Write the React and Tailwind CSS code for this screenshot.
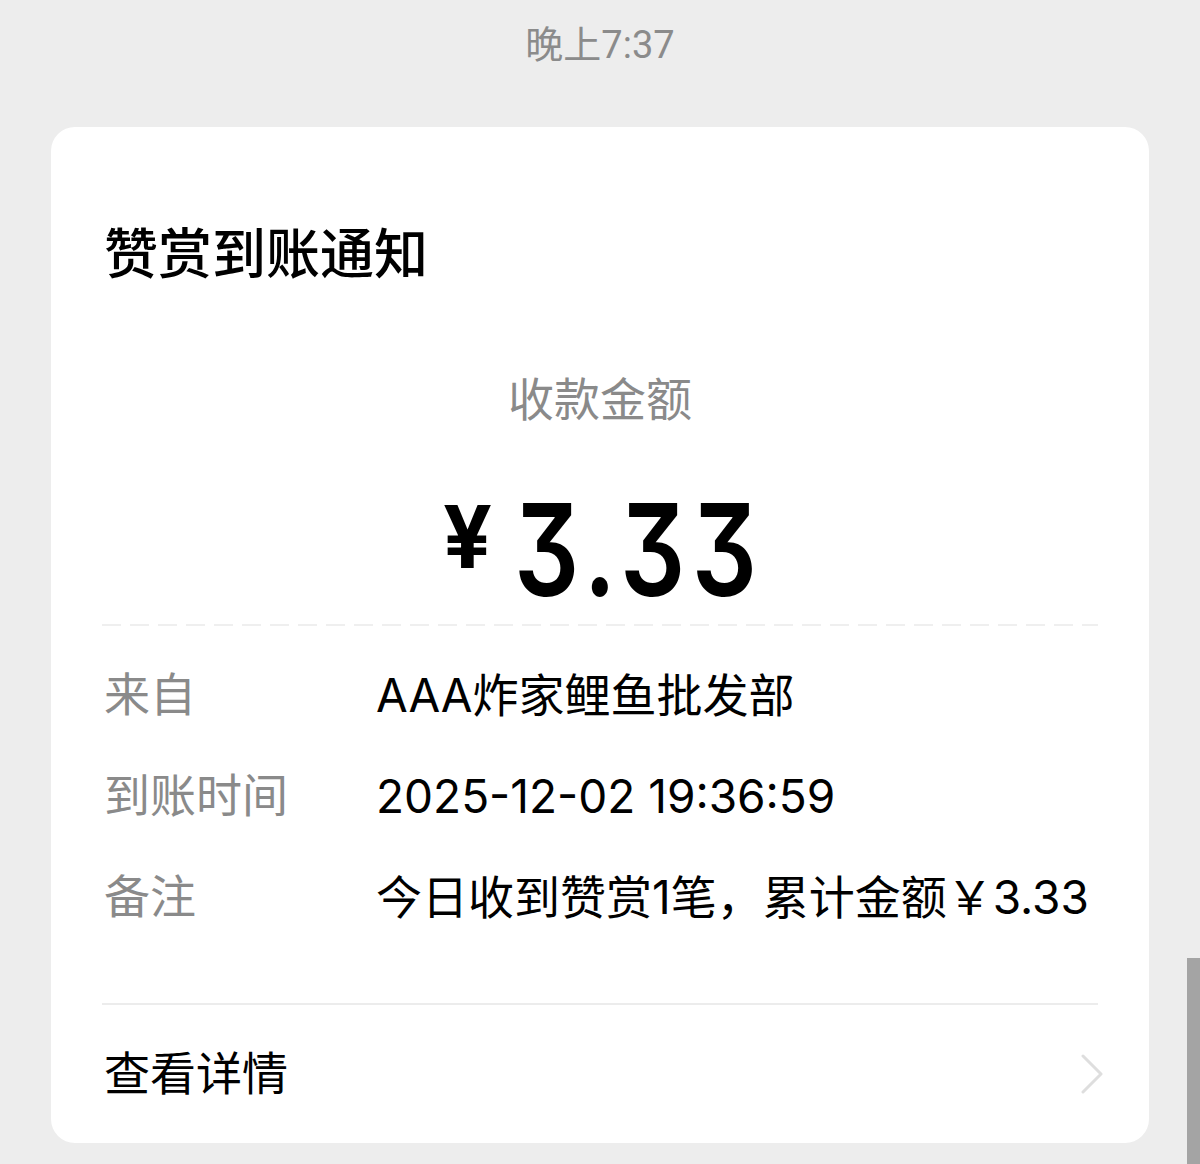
const rows = [
  { label: '来自', value: 'AAA炸家鲤鱼批发部' },
  { label: '到账时间', value: '2025-12-02 19:36:59' },
  { label: '备注', value: '今日收到赞赏1笔，累计金额￥3.33' },
]

const App = () => {
  return (
    <div className="relative h-[1164px] w-full overflow-hidden bg-[#ededed] font-['Roboto','Noto_Sans_CJK_SC',sans-serif]">
      {/* Time stamp */}
      <div className="flex h-[90px] items-center justify-center pb-[1px] text-[38px] leading-none text-[#8b8b8b]">
        晚上7:37
      </div>

      {/* Card */}
      <div className="mx-[51px] mt-[37px] flex flex-col rounded-[24px] bg-white">
        <div className="mt-[89px] flex h-[80px] items-center px-[53px] text-[54px] font-medium leading-none text-black">
          赞赏到账通知
        </div>

        <div className="mt-[74px] flex h-[60px] items-center justify-center text-[46px] leading-none text-[#8a8a8a]">
          收款金额
        </div>

        <div className="mt-[70px] flex h-[100px] items-center pl-[392px] text-black font-['Inter',sans-serif]">
          <span className="mt-[-26px] text-[86px] font-bold leading-none">¥</span>
          <span className="ml-[22px] origin-left scale-x-[0.8] text-[128px] font-semibold leading-none tracking-[8px] [font-feature-settings:'cv09']">3.33</span>
        </div>

        {/* Dashed separator */}
        <div className="mx-[51px] mt-[24px] h-[2px] bg-[repeating-linear-gradient(to_right,#efefef_0,#efefef_19px,transparent_19px,transparent_28px)]" />

        <div className="mt-[18px] flex flex-col px-[53px]">
          {rows.map((row) => (
            <div key={row.label} className="flex h-[101px] items-center text-[46px] leading-none">
              <div className="w-[272px] shrink-0 text-[#8a8a8a]">{row.label}</div>
              <div className="whitespace-nowrap text-black font-['Inter','Noto_Sans_CJK_SC',sans-serif]">{row.value}</div>
            </div>
          ))}
        </div>

        <div className="mx-[51px] mt-[56px] h-[2px] bg-[#ececec]" />

        <div className="flex h-[138px] items-center justify-between pl-[53px] pr-[45px]">
          <span className="text-[46px] leading-none text-black">查看详情</span>
          <svg width="24" height="40" viewBox="0 0 24 40" fill="none">
            <polyline points="3,2 21,20 3,38" stroke="#dedede" strokeWidth="3" strokeLinecap="round" strokeLinejoin="round" />
          </svg>
        </div>
      </div>

      {/* Scrollbar */}
      <div className="absolute right-0 top-[958px] h-[206px] w-[13px] bg-[#a4a4a4]" />
    </div>
  )
}

export default App
